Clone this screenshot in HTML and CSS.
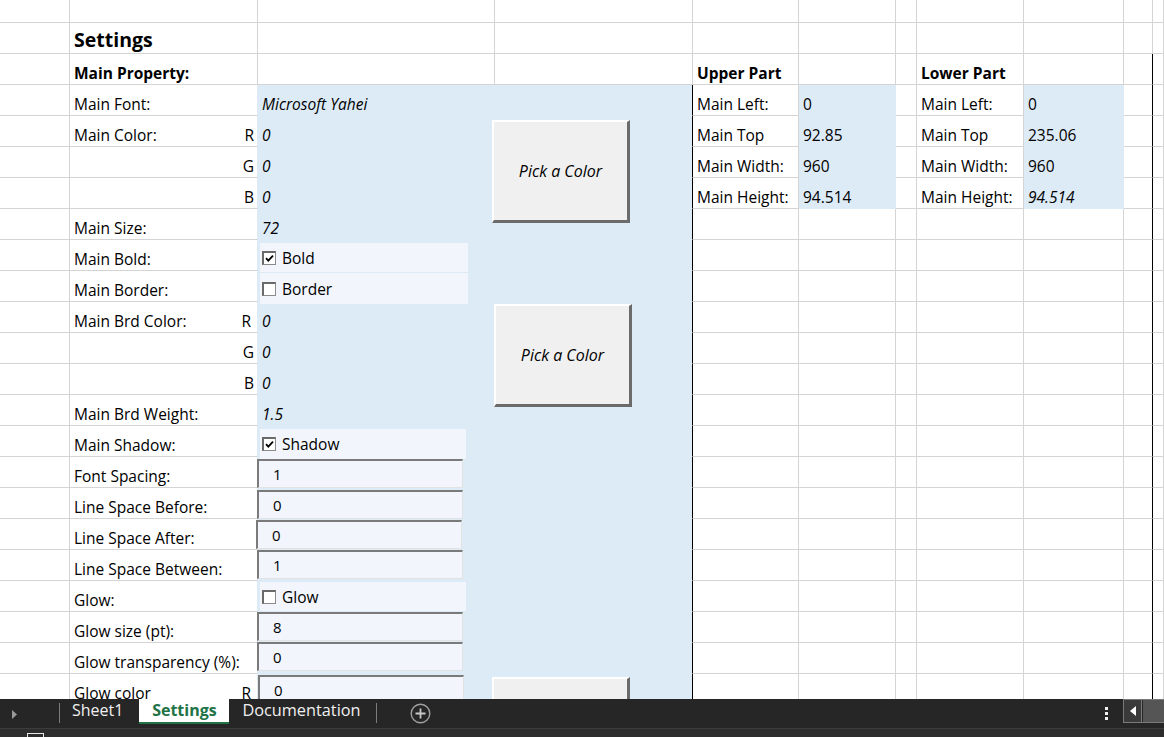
FILE: index.html
```html
<!DOCTYPE html>
<html>
<head>
<meta charset="utf-8">
<title>Settings</title>
<link rel="stylesheet" href="styles.css">
</head>
<body>
<div class="app">
  <div class="sheet">
    <div class="row first"><div></div><div></div><div></div><div></div><div></div><div></div><div></div><div></div><div></div><div></div><div></div></div>
    <div class="row"><div></div><div class="title">Settings</div><div></div><div></div><div></div><div></div><div></div><div></div><div></div><div></div><div></div></div>
    <div class="row k"><div></div><div class="bold">Main Property:</div><div></div><div></div><div class="bold">Upper Part</div><div></div><div></div><div class="bold">Lower Part</div><div></div><div></div><div></div></div>
    <div class="row k bl up"><div></div><div>Main Font:</div><div class="it">Microsoft Yahei</div><div></div><div>Main Left:</div><div>0</div><div></div><div>Main Left:</div><div>0</div><div></div><div></div></div>
    <div class="row k bl up"><div></div><div class="split"><span>Main Color:</span><span class="ch">R</span></div><div class="it">0</div><div></div><div>Main Top</div><div>92.85</div><div></div><div>Main Top</div><div>235.06</div><div></div><div></div></div>
    <div class="row k bl up"><div></div><div class="split"><span></span><span class="ch">G</span></div><div class="it">0</div><div></div><div>Main Width:</div><div>960</div><div></div><div>Main Width:</div><div>960</div><div></div><div></div></div>
    <div class="row k bl up"><div></div><div class="split"><span></span><span class="ch">B</span></div><div class="it">0</div><div></div><div>Main Height:</div><div>94.514</div><div></div><div>Main Height:</div><div class="it">94.514</div><div></div><div></div></div>
    <div class="row k bl"><div></div><div>Main Size:</div><div class="it">72</div><div></div><div></div><div></div><div></div><div></div><div></div><div></div><div></div></div>
    <div class="row k bl"><div></div><div>Main Bold:</div><div></div><div></div><div></div><div></div><div></div><div></div><div></div><div></div><div></div></div>
    <div class="row k bl"><div></div><div>Main Border:</div><div></div><div></div><div></div><div></div><div></div><div></div><div></div><div></div><div></div></div>
    <div class="row k bl"><div></div><div class="split"><span>Main Brd Color:</span><span class="ch sp">R</span></div><div class="it">0</div><div></div><div></div><div></div><div></div><div></div><div></div><div></div><div></div></div>
    <div class="row k bl"><div></div><div class="split"><span></span><span class="ch">G</span></div><div class="it">0</div><div></div><div></div><div></div><div></div><div></div><div></div><div></div><div></div></div>
    <div class="row k bl"><div></div><div class="split"><span></span><span class="ch">B</span></div><div class="it">0</div><div></div><div></div><div></div><div></div><div></div><div></div><div></div><div></div></div>
    <div class="row k bl"><div></div><div>Main Brd Weight:</div><div class="it">1.5</div><div></div><div></div><div></div><div></div><div></div><div></div><div></div><div></div></div>
    <div class="row k bl"><div></div><div>Main Shadow:</div><div></div><div></div><div></div><div></div><div></div><div></div><div></div><div></div><div></div></div>
    <div class="row k bl"><div></div><div>Font Spacing:</div><div></div><div></div><div></div><div></div><div></div><div></div><div></div><div></div><div></div></div>
    <div class="row k bl"><div></div><div>Line Space Before:</div><div></div><div></div><div></div><div></div><div></div><div></div><div></div><div></div><div></div></div>
    <div class="row k bl"><div></div><div>Line Space After:</div><div></div><div></div><div></div><div></div><div></div><div></div><div></div><div></div><div></div></div>
    <div class="row k bl"><div></div><div>Line Space Between:</div><div></div><div></div><div></div><div></div><div></div><div></div><div></div><div></div><div></div></div>
    <div class="row k bl"><div></div><div>Glow:</div><div></div><div></div><div></div><div></div><div></div><div></div><div></div><div></div><div></div></div>
    <div class="row k bl"><div></div><div>Glow size (pt):</div><div></div><div></div><div></div><div></div><div></div><div></div><div></div><div></div><div></div></div>
    <div class="row k bl"><div></div><div>Glow transparency (%):</div><div></div><div></div><div></div><div></div><div></div><div></div><div></div><div></div><div></div></div>
    <div class="row k bl"><div></div><div class="split"><span>Glow color</span><span class="ch sp">R</span></div><div></div><div></div><div></div><div></div><div></div><div></div><div></div><div></div><div></div></div>

    <!-- floating form controls -->
    <label class="cb cb-bold"><span class="box"><svg viewBox="0 0 9 9" width="9" height="9"><path d="M1 4.2 L3.3 6.6 L8 1.6" fill="none" stroke="#000" stroke-width="1.8"/></svg></span>Bold</label>
    <label class="cb cb-border"><span class="box"></span>Border</label>
    <label class="cb cb-shadow"><span class="box"><svg viewBox="0 0 9 9" width="9" height="9"><path d="M1 4.2 L3.3 6.6 L8 1.6" fill="none" stroke="#000" stroke-width="1.8"/></svg></span>Shadow</label>
    <label class="cb cb-glow"><span class="box"></span>Glow</label>

    <div class="tb tb1">1</div>
    <div class="tb tb2">0</div>
    <div class="tb tb3">0</div>
    <div class="tb tb4">1</div>
    <div class="tb tb5">8</div>
    <div class="tb tb6">0</div>
    <div class="tb tb7">0</div>

    <div class="btn btn1">Pick a Color</div>
    <div class="btn btn2">Pick a Color</div>
    <div class="btn btn3"></div>
  </div>

  <div class="tabbar">
    <div class="nav"><svg width="6" height="9" viewBox="0 0 6 9"><path d="M0 0 L5 4.5 L0 9 Z" fill="#9a9a9a"/></svg></div>
    <div class="sep"></div>
    <div class="tab t-sheet1">Sheet1</div>
    <div class="tab active">Settings</div>
    <div class="tab t-doc">Documentation</div>
    <div class="sep"></div>
    <div class="add"><svg width="21" height="21" viewBox="0 0 21 21"><circle cx="10.5" cy="10.5" r="9.3" fill="none" stroke="#a0a0a0" stroke-width="1.4"/><path d="M10.5 5.5 V15.5 M5.5 10.5 H15.5" stroke="#c8c8c8" stroke-width="1.8"/></svg></div>
    <div class="spacer"></div>
    <div class="more"><span></span><span></span><span></span></div>
    <div class="hscroll"><div class="hbtn"><svg width="6" height="10" viewBox="0 0 6 10"><path d="M6 0 L0 5 L6 10 Z" fill="#ffffff"/></svg></div><div class="thumb"></div></div>
  </div>
  <div class="status"><span class="sbox"></span></div>
</div>
</body>
</html>
```

FILE: styles.css
```css
* { box-sizing: border-box; }
html, body { margin: 0; padding: 0; background: #ffffff; }
body {
  font-family: "Open Sans", "Noto Sans", sans-serif;
  font-size: 15.5px;
  color: #000;
  width: 1164px;
  height: 737px;
  overflow: hidden;
}
.app { display: flex; flex-direction: column; width: 1164px; height: 737px; }

.sheet {
  position: relative;
  height: 699px;
  overflow: hidden;
  flex: none;
}

.row {
  display: grid;
  grid-template-columns: 70px 188px 237px 198px 106px 97px 21px 107px 100px 29px 1fr;
  height: 31px;
}
.row.first { height: 23px; }
.row > div {
  border-right: 1px solid #d4d4d4;
  border-bottom: 1px solid #d4d4d4;
  display: flex;
  align-items: flex-end;
  padding: 0 3px 1px 4px;
  white-space: nowrap;
  line-height: 20px;
  min-width: 0;
}

.row.k > div:nth-child(10) { border-right-color: #000; }
.row.bl > div:nth-child(2) { border-right-color: #ddebf7; }
.row.bl > div:nth-child(3),
.row.bl > div:nth-child(4) { background: #ddebf7; border-color: #ddebf7; }
.row.bl > div:nth-child(4) { border-right-color: #000; }
.row.up > div:nth-child(6),
.row.up > div:nth-child(9) { background: #ddebf7; border-color: #ddebf7; }

.row > div.it { font-style: italic; }
.row > div.bold { font-weight: 700; }
.row > div.title { font-weight: 700; font-size: 19.5px; padding-bottom: 0; line-height: 26px; }
.row > div.split { justify-content: space-between; }
.ch.sp { padding-right: 3px; }

/* checkbox controls */
.cb {
  position: absolute;
  left: 260px;
  width: 206px;
  background: #f2f6fc;
  display: flex;
  align-items: center;
  gap: 6px;
  padding-left: 2px;
  font-size: 15.5px;
}
.cb-bold { top: 243px; height: 29px; width: 208px; }
.cb-border { top: 273px; height: 31px; width: 208px; }
.cb-shadow { top: 429px; height: 30px; }
.cb-glow { top: 582px; height: 29px; }
.box {
  width: 14px;
  height: 14px;
  background: #fff;
  border: 1px solid #8a8a8a;
  border-top: 2px solid #6a6a6a;
  border-left: 2px solid #6a6a6a;
  display: flex;
  align-items: center;
  justify-content: center;
  flex: none;
}

/* text boxes */
.tb {
  position: absolute;
  left: 257px;
  width: 206px;
  height: 29px;
  background: #f2f6fc;
  border-top: 2px solid #7a7a7a;
  border-left: 2px solid #7a7a7a;
  border-right: 1px solid #e2e2e2;
  border-bottom: 1px solid #e2e2e2;
  padding-left: 14px;
  padding-bottom: 1px;
  display: flex;
  align-items: center;
  font-size: 15px;
}
.tb1 { top: 459px; }
.tb2 { top: 490px; }
.tb3 { top: 520px; left: 256px; }
.tb4 { top: 550px; }
.tb5 { top: 612px; }
.tb6 { top: 642px; }
.tb7 { top: 675px; left: 258px; }

/* buttons */
.btn {
  position: absolute;
  width: 138px;
  height: 103px;
  background: #f0f0f0;
  border-top: 2px solid #ffffff;
  border-left: 2px solid #ffffff;
  border-right: 3px solid #6b6b6b;
  border-bottom: 3px solid #6b6b6b;
  display: flex;
  align-items: center;
  justify-content: center;
  font-style: italic;
  font-size: 16px;
}
.btn1 { left: 492px; top: 120px; }
.btn2 { left: 494px; top: 304px; }
.btn3 { left: 492px; top: 677px; }

/* sheet tab bar */
.tabbar {
  height: 29px;
  flex: none;
  background: #262626;
  display: flex;
  align-items: flex-start;
  color: #f0f0f0;
  font-size: 16px;
}
.nav { width: 59px; height: 29px; display: flex; align-items: center; padding-left: 12px; padding-top: 1px; }
.sep { width: 1px; height: 20px; margin-top: 4px; background: #7c7c7c; flex: none; }
.tab { height: 25px; line-height: 22px; white-space: nowrap; }
.t-sheet1 { padding: 0 16px 0 12px; }
.tab.active {
  background: #ffffff;
  color: #217346;
  font-weight: 700;
  width: 90px;
  text-align: center;
  border-bottom: 2px solid #217346;
  line-height: 23px;
}
.t-doc { padding: 0 15px 0 13px; font-size: 16.3px; }
.add { margin-left: 33px; height: 29px; display: flex; align-items: center; }
.spacer { flex: 1; }
.more { width: 6px; height: 29px; display: flex; flex-direction: column; justify-content: center; align-items: center; gap: 2px; margin-right: 14px; }
.more span { width: 3px; height: 3px; background: #f0f0f0; }
.hscroll { display: flex; height: 24px; width: 41px; border: 1px solid #7a7a7a; border-right: none; }
.hbtn { width: 18px; height: 22px; display: flex; align-items: center; justify-content: center; border-right: 1px solid #7a7a7a; background: #3a3a3a; }
.thumb { flex: 1; background: #555555; margin-left: 1px; }

.status {
  flex: 1;
  background: #2d2d2d;
  border-top: 1px solid #3c3c3c;
  position: relative;
}
.sbox {
  position: absolute;
  left: 27px;
  top: 4px;
  width: 17px;
  height: 12px;
  border: 1px solid #e8e8e8;
}
```
